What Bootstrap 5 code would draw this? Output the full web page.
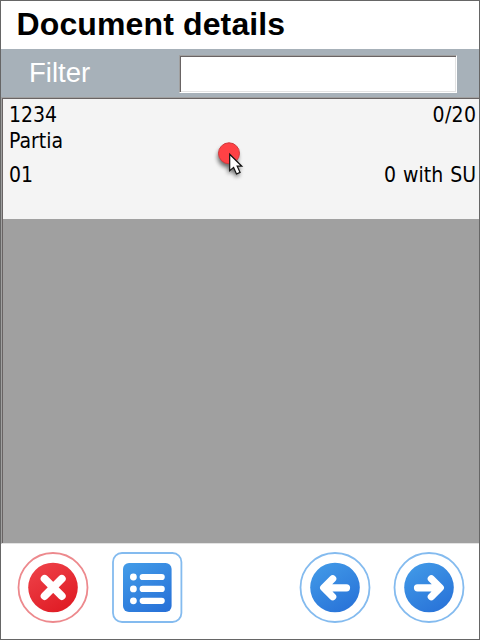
<!DOCTYPE html>
<html lang="en">
<head>
<meta charset="utf-8">
<meta name="viewport" content="width=device-width, initial-scale=1">
<title>Document details</title>
<link href="https://cdn.jsdelivr.net/npm/bootstrap@5.3.0/dist/css/bootstrap.min.css" rel="stylesheet">
<style>
body { font-family: "Liberation Sans", Arial, sans-serif; color: #000; }
.app-window { width: 480px; height: 640px; border: 1px solid #666; background: #fff; }
.app-title { height: 48px; padding-left: 15.5px; font-size: 32px; line-height: 46px; letter-spacing: .13px; }
.filter-bar { height: 48px; background: #a7b1b9; padding: 0 22px 0 28px; }
.filter-label { width: 150px; font-size: 27.5px; line-height: 48px; color: #fff; }
.filter-input { height: 38px; margin-top: 6px; background: #fff; border: 1px solid #fff; border-top-color: #a0a0a0; border-left-color: #a0a0a0; outline: 0; border-radius: 0; padding: 0 4px; box-shadow: inset 1px 1px #696464, inset -1px -1px #e3e3e3; }
.doc-list { height: 447px; background: #a0a0a0; border: solid #a0a0a0; border-width: 1px 0 0 1px; box-shadow: inset 1px 1px #696464; padding: 1px 0 0 1px; border-bottom: 1px solid #e3e3e3; }
.doc-item { height: 120px; background: #f4f4f4; padding: 0 3px 0 6px; font-family: "DejaVu Sans Condensed", "DejaVu Sans", sans-serif; font-stretch: condensed; font-size: 21px; line-height: 26px; }
.doc-item .line-one { padding-top: 3px; }
.doc-item .line-three { padding-top: 8px; }
.doc-item .count { letter-spacing: .35px; margin-right: -.35px; }
.doc-item .stock { word-spacing: 1px; }
.pointer { left: 209px; top: 136px; }
.toolbar-row { padding: 6.5px 13px 0 15px; }
.tool { width: 74px; height: 74px; line-height: 0; }
.menu-tool { margin-left: 23px; }
.menu-tool svg { overflow: visible; }
.next-tool { margin-left: 20px; }
</style>
<script src="https://cdn.jsdelivr.net/npm/bootstrap@5.3.0/dist/js/bootstrap.bundle.min.js"></script>
</head>
<body class="overflow-hidden">
<main class="app-window position-relative d-flex flex-column overflow-hidden">
  <h1 class="app-title fw-bold m-0">Document details</h1>
  <div class="filter-bar d-flex">
    <label class="filter-label" for="filter">Filter</label>
    <input id="filter" class="filter-input flex-grow-1" type="text">
  </div>
  <section class="doc-list">
    <div class="doc-item">
      <div class="line-one d-flex justify-content-between"><span>1234</span><span class="count">0/20</span></div>
      <div>Partia</div>
      <div class="line-three d-flex justify-content-between"><span>01</span><span class="stock">0 with SU</span></div>
    </div>
  </section>
  <nav class="toolbar-row d-flex">
    <button class="tool btn p-0 border-0" type="button" aria-label="Cancel">
      <svg width="74" height="74" viewBox="0 0 74 74">
        <defs><linearGradient id="red" x1=".2" y1="0" x2=".8" y2="1"><stop stop-color="#ee4148"/><stop offset="1" stop-color="#df1a23"/></linearGradient>
        <linearGradient id="blue" x1=".2" y1="0" x2=".8" y2="1"><stop stop-color="#4199e7"/><stop offset="1" stop-color="#2872d8"/></linearGradient></defs>
        <circle cx="37" cy="36.5" r="34.5" fill="#fff" stroke="#ed898d" stroke-width="1.8"/>
        <circle cx="37" cy="36.5" r="24.8" fill="url(#red)"/>
        <path d="M28.6 27.8 45.8 45M45.8 27.8 28.6 45" stroke="#fff" stroke-width="7.8" stroke-linecap="round"/>
      </svg>
    </button>
    <button class="tool menu-tool btn p-0 border-0" type="button" aria-label="List">
      <svg width="74" height="74" viewBox="0 0 74 74">
        <rect x="0" y="2" width="68.4" height="69" rx="9" fill="#fff" stroke="#84bbef" stroke-width="1.8"/>
        <rect x="10" y="12" width="48.6" height="49" rx="6" fill="url(#blue)"/>
        <g fill="#fff"><circle cx="20.4" cy="26" r="3.4"/><circle cx="20.4" cy="37.9" r="3.4"/><circle cx="20.4" cy="49.8" r="3.4"/></g>
        <path d="M29.7 26h19M29.7 37.9h19M29.7 49.8h19" stroke="#fff" stroke-width="6.2" stroke-linecap="round"/>
      </svg>
    </button>
    <button class="tool btn p-0 border-0 ms-auto" type="button" aria-label="Back">
      <svg width="74" height="74" viewBox="0 0 74 74">
        <circle cx="37" cy="36.5" r="34.5" fill="#fff" stroke="#84bbef" stroke-width="1.8"/>
        <circle cx="37" cy="36.5" r="24.8" fill="url(#blue)"/>
        <path d="M48.5 36.8H26M34.7 27.8l-9 9 9 9" fill="none" stroke="#fff" stroke-width="7.2" stroke-linecap="round" stroke-linejoin="round"/>
      </svg>
    </button>
    <button class="tool btn p-0 border-0 next-tool" type="button" aria-label="Next">
      <svg width="74" height="74" viewBox="0 0 74 74">
        <circle cx="37" cy="36.5" r="34.5" fill="#fff" stroke="#84bbef" stroke-width="1.8"/>
        <circle cx="37" cy="36.5" r="24.8" fill="url(#blue)"/>
        <path d="M25.5 36.8H48M39.3 27.8l9 9-9 9" fill="none" stroke="#fff" stroke-width="7.2" stroke-linecap="round" stroke-linejoin="round"/>
      </svg>
    </button>
  </nav>
  <svg class="pointer position-absolute" width="48" height="48" viewBox="210 137 48 48">
    <defs><filter id="soft" x="-50%" y="-50%" width="200%" height="200%"><feGaussianBlur stdDeviation="2"/></filter></defs>
    <g filter="url(#soft)" opacity=".55"><circle cx="228" cy="157" r="10.5"/><path d="M228 157v17l4-3 4 6 4-2-3-6h5z"/></g>
    <circle cx="229" cy="153.3" r="10.5" fill="#ff4145" stroke="#d2383c" stroke-width="1"/>
    <path d="M229.7 154.2v16.6l3.9-3.4 2.9 6.6 3.6-1.6-2.9-6.2h4.6z" fill="#fff" stroke="#111" stroke-width="1.2"/>
  </svg>
</main>
</body>
</html>
